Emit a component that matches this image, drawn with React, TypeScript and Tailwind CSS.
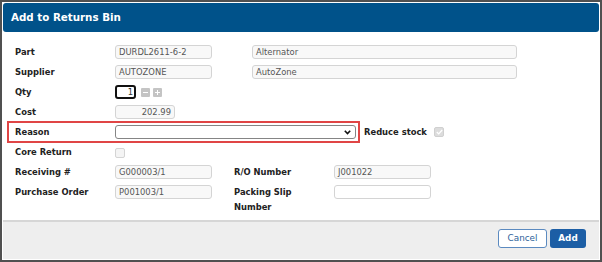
import React from 'react';

const field =
  'h-[14px] border border-[#d4d4d4] rounded-[3px] bg-[#f8f8f8] px-[3px] text-[8.4px] leading-[12px] text-[#555]';

const Label = ({ children, w = 'w-[100px]' }: { children: React.ReactNode; w?: string }) => (
  <div className={`${w} font-bold text-[8.4px] text-[#222] shrink-0`}>{children}</div>
);

const App = () => {
  return (
    <div
      className="w-[602px] h-[262px] border-2 border-[#505050] p-px bg-white flex flex-col"
      style={{ fontFamily: '"DejaVu Sans", Verdana, sans-serif' }}
    >
      {/* Header */}
      <div className="h-[29px] shrink-0 bg-[#00528a] rounded-[3px] flex items-center pl-[8px]">
        <span className="text-white font-bold text-[10.3px]">Add to Returns Bin</span>
      </div>

      {/* Body */}
      <div className="flex-1 pt-[10px] pl-[12px]">
        <div className="h-[20px] flex items-center">
          <Label>Part</Label>
          <div className={`${field} w-[97px]`}>DURDL2611-6-2</div>
          <div className={`${field} w-[265px] ml-[40px]`}>Alternator</div>
        </div>
        <div className="h-[20px] flex items-center">
          <Label>Supplier</Label>
          <div className={`${field} w-[97px]`}>AUTOZONE</div>
          <div className={`${field} w-[265px] ml-[40px]`}>AutoZone</div>
        </div>
        <div className="h-[20px] flex items-center">
          <Label>Qty</Label>
          <div className="w-[21px] h-[14px] border-2 border-[#111] rounded-[3px] bg-white text-[8.4px] leading-[10px] text-right pr-[1px] text-[#333]">
            1
          </div>
          <div className="ml-[5px] w-[9px] h-[9px] bg-[#c4c4c4] rounded-[1px] flex items-center justify-center">
            <div className="w-[5px] h-px bg-white" />
          </div>
          <div className="ml-[3px] w-[9px] h-[9px] bg-[#c4c4c4] rounded-[1px] flex items-center justify-center relative">
            <div className="w-[5px] h-px bg-white" />
            <div className="absolute w-px h-[5px] bg-white" />
          </div>
        </div>
        <div className="h-[20px] flex items-center">
          <Label>Cost</Label>
          <div className={`${field} w-[60px] text-right`}>202.99</div>
        </div>
        <div className="h-[20px] flex items-center">
          <div className="-ml-[8px] w-[353px] h-[22px] border-2 border-[#e04545] flex items-center pl-[6px]">
            <Label>Reason</Label>
            <div className="w-[241px] h-[14px] border border-[#858585] rounded-[3px] bg-white flex items-center justify-end pr-[4px]">
              <svg width="7" height="5" viewBox="0 0 7 5">
                <path d="M0.8 0.8 L3.5 3.6 L6.2 0.8" fill="none" stroke="#111" strokeWidth="1.6" />
              </svg>
            </div>
          </div>
          <div className="ml-[4px] font-bold text-[8.4px] text-[#222] w-[70px]">Reduce stock</div>
          <div className="w-[10px] h-[10px] rounded-[2px] bg-[#dcdcdc] border border-[#d0d0d0] flex items-center justify-center">
            <svg width="7" height="6" viewBox="0 0 7 6">
              <path d="M0.8 3 L2.7 4.9 L6.2 1" fill="none" stroke="#fff" strokeWidth="1.3" />
            </svg>
          </div>
        </div>
        <div className="h-[20px] flex items-center">
          <Label>Core Return</Label>
          <div className="w-[10px] h-[10px] mt-[2px] rounded-[2px] bg-[#f4f4f4] border border-[#d4d4d4]" />
        </div>
        <div className="h-[20px] flex items-center">
          <Label>Receiving #</Label>
          <div className={`${field} w-[97px]`}>G000003/1</div>
          <div className="ml-[22px]">
            <Label>R/O Number</Label>
          </div>
          <div className={`${field} w-[97px]`}>J001022</div>
        </div>
        <div className="flex items-start">
          <div className="h-[20px] flex items-center">
            <Label>Purchase Order</Label>
            <div className={`${field} w-[97px]`}>P001003/1</div>
          </div>
          <div className="ml-[22px] w-[100px] pt-[3px] font-bold text-[8.4px] leading-[15px] text-[#222]">
            Packing Slip
            <br />
            Number
          </div>
          <div className="mt-[3px] w-[97px] h-[14px] border border-[#d4d4d4] rounded-[3px] bg-white" />
        </div>
      </div>

      {/* Footer */}
      <div className="h-[39px] shrink-0 border-t-2 border-[#d6d6d6] bg-[#eeeeee] flex justify-end items-start pt-[7px] pr-[13px] gap-[3px]">
        <button className="w-[49px] h-[19px] border border-[#5b8ac0] rounded-[3px] bg-white text-[#2c5f9a] text-[8.8px]">
          Cancel
        </button>
        <button className="w-[36px] h-[19px] rounded-[3px] bg-[#1c5ea5] text-white text-[8.8px] font-bold">
          Add
        </button>
      </div>
    </div>
  );
};

export default App;
